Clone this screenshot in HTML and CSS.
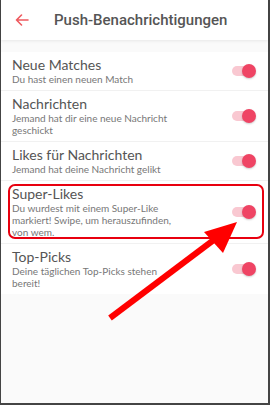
FILE: index.html
```html
<!DOCTYPE html>
<html lang="de">
<head>
<meta charset="utf-8">
<link rel="stylesheet" href="styles.css">
</head>
<body>
<div class="frame">
  <header class="topbar">
    <svg class="back" width="14" height="12" viewBox="0 0 14 12"><path d="M13 6H1.5M6.5 1L1.5 6l5 5" fill="none" stroke="#ee5a5f" stroke-width="1.6" stroke-linecap="round" stroke-linejoin="round"/></svg>
    <h1 class="title">Push-Benachrichtigungen</h1>
  </header>
  <ul class="list">
    <li class="row">
      <div class="text"><div class="name">Neue Matches</div><div class="desc">Du hast einen neuen Match</div></div>
      <span class="toggle"><span class="knob"></span></span>
    </li>
    <li class="row">
      <div class="text"><div class="name">Nachrichten</div><div class="desc">Jemand hat dir eine neue Nachricht geschickt</div></div>
      <span class="toggle"><span class="knob"></span></span>
    </li>
    <li class="row">
      <div class="text"><div class="name">Likes für Nachrichten</div><div class="desc">Jemand hat deine Nachricht gelikt</div></div>
      <span class="toggle"><span class="knob"></span></span>
    </li>
    <li class="row highlight">
      <div class="text"><div class="name">Super-Likes</div><div class="desc">Du wurdest mit einem Super-Like markiert! Swipe, um herauszufinden, von wem.</div></div>
      <span class="toggle"><span class="knob"></span></span>
    </li>
    <li class="row">
      <div class="text"><div class="name">Top-Picks</div><div class="desc">Deine täglichen Top-Picks stehen bereit!</div></div>
      <span class="toggle"><span class="knob"></span></span>
    </li>
  </ul>
  <svg class="arrow" width="270" height="405" viewBox="0 0 270 405">
    <line x1="109" y1="318" x2="218" y2="236" stroke="#f00" stroke-width="6"/>
    <polygon points="236,222 203,232 222,253" fill="#f00"/>
  </svg>
</div>
</body>
</html>
```

FILE: styles.css
```css
html, body { margin: 0; padding: 0; }
body { width: 270px; height: 405px; overflow: hidden; background: #fafafa; }
.frame {
  position: relative;
  box-sizing: border-box;
  width: 270px; height: 405px;
  border-left: 1px solid #444;
  border-right: 2px solid #444;
  border-bottom: 2px solid #444;
  background: #fafafa;
  font-family: Lato, "Open Sans", sans-serif;
}
.topbar {
  height: 40px;
  background: #fff;
  display: flex;
  align-items: center;
  box-shadow: 0 1px 3px rgba(0,0,0,0.08);
  position: relative;
  z-index: 1;
}
.back { margin-left: 14px; }
.title {
  margin: 0 0 0 25px;
  font-family: Roboto, sans-serif;
  font-weight: 500;
  font-size: 15px;
  color: #555;
}
.list {
  list-style: none;
  margin: 12px 0 0 0;
  padding: 0;
  background: #fff;
}
.row {
  display: flex;
  align-items: center;
  padding: 5px 12px 5px 11px;
  border-bottom: 1px solid #f1f1f1;
  position: relative;
}
.row:last-child { border-bottom: none; }
.text { flex: 1; }
.text .desc { max-width: 166px; }
.name { font-size: 14px; color: #555; line-height: 16px; }
.desc { font-size: 10px; color: #777; line-height: 12px; }
.toggle {
  position: relative;
  width: 18px; height: 10px;
  border-radius: 5px;
  background: #f9c8d1;
  margin-right: 6px;
}
.knob {
  position: absolute;
  right: -6px; top: -2px;
  width: 14px; height: 14px;
  border-radius: 50%;
  background: #ef4464;
  box-shadow: 0 1px 2px rgba(0,0,0,0.2);
}
.highlight::after {
  content: "";
  position: absolute;
  left: 7px; right: 4px; top: 3px; bottom: 4px;
  border: 2px solid #e8000f;
  border-radius: 7px;
}
.arrow { position: absolute; left: 0; top: 0; pointer-events: none; }
```
